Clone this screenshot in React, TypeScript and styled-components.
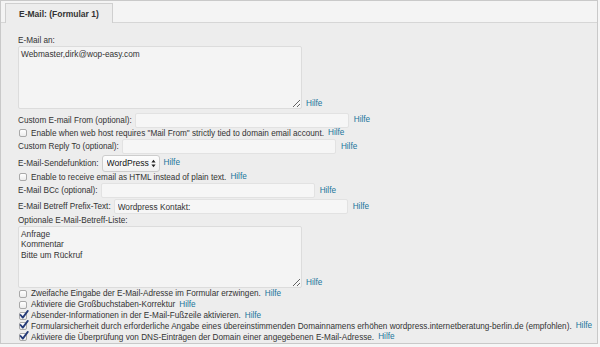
import React from 'react';
import styled, { createGlobalStyle } from 'styled-components';

const GlobalStyle = createGlobalStyle`
    html, body {
        margin: 0;
        padding: 0;
        background: #f6f6f6;
    }
    body {
        font-family: 'Liberation Sans', Arial, sans-serif;
        font-size: 8.2px;
        color: #333;
    }
`

const Help: React.FC = () => <HelpLink href="#">Hilfe</HelpLink>

const Check: React.FC<{ checked?: boolean }> = ({ checked }) => (
    <Box>
        {checked && (
            <svg width="10" height="10" viewBox="0 0 10 10">
                <path d="M1.6 5 L3.8 7.6 L8.8 0.9" fill="none" stroke="#243a78" strokeWidth="1.8" strokeLinecap="round" strokeLinejoin="round" />
            </svg>
        )}
    </Box>
)

const App: React.FC = () => {
    return (
        <>
            <GlobalStyle />
            <Frame>
                <TabBar>
                    <Tab>E-Mail: (Formular 1)</Tab>
                </TabBar>
                <Body>
                    <Label>E-Mail an:</Label>
                    <AreaRow>
                        <TextArea defaultValue="Webmaster,dirk@wop-easy.com" />
                        <Help />
                    </AreaRow>

                    <FieldRow $top={3}>
                        <span>Custom E-mail From (optional):</span>
                        <Input $width={214} />
                        <Help />
                    </FieldRow>
                    <CheckRow>
                        <Check />
                        <span>Enable when web host requires "Mail From" strictly tied to domain email account.</span>
                        <Help />
                    </CheckRow>
                    <FieldRow>
                        <span>Custom Reply To (optional):</span>
                        <Input $width={214} />
                        <Help />
                    </FieldRow>
                    <SelectRow>
                        <span>E-Mail-Sendefunktion:</span>
                        <SelectWrap>
                            <Select defaultValue="wp">
                                <option value="wp">WordPress</option>
                                <option value="php">PHP</option>
                            </Select>
                            <Arrows width="5" height="9" viewBox="0 0 5 9">
                                <path d="M2.5 0.8 L4.6 3.6 H0.4 Z M2.5 8.2 L4.6 5.4 H0.4 Z" fill="#222" />
                            </Arrows>
                        </SelectWrap>
                        <Help />
                    </SelectRow>
                    <CheckRow>
                        <Check />
                        <span>Enable to receive email as HTML instead of plain text.</span>
                        <Help />
                    </CheckRow>
                    <FieldRow>
                        <span>E-Mail BCc (optional):</span>
                        <Input $width={214} />
                        <Help />
                    </FieldRow>
                    <FieldRow>
                        <span>E-Mail Betreff Prefix-Text:</span>
                        <Input $width={234} defaultValue="Wordpress Kontakt:" />
                        <Help />
                    </FieldRow>

                    <Label>Optionale E-Mail-Betreff-Liste:</Label>
                    <AreaRow>
                        <TextArea $height={62} defaultValue={'Anfrage\nKommentar\nBitte um Rückruf'} />
                        <Help />
                    </AreaRow>

                    <CheckList>
                        <CheckRow>
                            <Check />
                            <span>Zweifache Eingabe der E-Mail-Adresse im Formular erzwingen.</span>
                            <Help />
                        </CheckRow>
                        <CheckRow>
                            <Check />
                            <span>Aktiviere die Großbuchstaben-Korrektur</span>
                            <Help />
                        </CheckRow>
                        <CheckRow>
                            <Check checked />
                            <span>Absender-Informationen in der E-Mail-Fußzeile aktivieren.</span>
                            <Help />
                        </CheckRow>
                        <CheckRow>
                            <Check checked />
                            <span>Formularsicherheit durch erforderliche Angabe eines übereinstimmenden Domainnamens erhöhen wordpress.internetberatung-berlin.de (empfohlen).</span>
                            <Help />
                        </CheckRow>
                        <CheckRow>
                            <Check checked />
                            <span>Aktiviere die Überprüfung von DNS-Einträgen der Domain einer angegebenen E-Mail-Adresse.</span>
                            <Help />
                        </CheckRow>
                    </CheckList>
                </Body>
            </Frame>
        </>
    )
}
export default App

const Frame = styled.div`
    width: 598px;
    height: 344px;
    box-sizing: border-box;
    border: 1px solid #c9c9c9;
    background: #ededed;
    display: flex;
    flex-direction: column;
    overflow: hidden;
`
const TabBar = styled.div`
    height: 22px;
    flex: 0 0 auto;
    box-sizing: border-box;
    background: #f4f4f4;
    border-bottom: 1px solid #d6d6d6;
    padding: 2px 0 0 4px;
    display: flex;
    align-items: flex-end;
`
const Tab = styled.div`
    height: 20px;
    box-sizing: border-box;
    margin-bottom: -1px;
    padding: 0 13px;
    background: #ededed;
    border: 1px solid #cfcfcf;
    border-bottom: none;
    font-size: 8.5px;
    font-weight: 700;
    color: #333;
    display: flex;
    align-items: center;
`
const Body = styled.div`
    padding: 12px 0 0 17px;
    display: flex;
    flex-direction: column;
`
const Label = styled.div`
    height: 11px;
    line-height: 11px;
`
const AreaRow = styled.div`
    display: flex;
    align-items: flex-end;
    gap: 4px;
`
const TextArea = styled.textarea<{ $height?: number }>`
    width: 284px;
    height: ${(p) => p.$height ?? 63}px;
    box-sizing: border-box;
    margin: 0;
    padding: 2px 2px;
    border: 1px solid #dcdcdc;
    border-radius: 2px;
    background: #f4f4f4;
    font-family: 'Liberation Sans', Arial, sans-serif;
    font-size: 8.3px;
    line-height: 10.5px;
    color: #333;
    resize: both;
    outline: none;
`
const HelpLink = styled.a`
    color: #21759b;
    text-decoration: none;
    line-height: 10px;
    &:visited {
        color: #21759b;
    }
`
const FieldRow = styled.div<{ $top?: number }>`
    height: 16px;
    margin-top: ${(p) => p.$top ?? 0}px;
    display: flex;
    align-items: center;
    white-space: nowrap;
`
const Input = styled.input<{ $width: number }>`
    width: ${(p) => p.$width}px;
    height: 15px;
    box-sizing: border-box;
    margin: 0 5px 0 3px;
    padding: 0 3px;
    border: 1px solid #e2e2e2;
    border-radius: 2px;
    background: #f6f6f6;
    font-family: 'Liberation Sans', Arial, sans-serif;
    font-size: 8.3px;
    color: #333;
    outline: none;
`
const SelectRow = styled.div`
    height: 17px;
    display: flex;
    align-items: center;
    white-space: nowrap;
`
const SelectWrap = styled.span`
    position: relative;
    display: inline-flex;
    margin: 0 4px 0 3px;
`
const Select = styled.select`
    appearance: none;
    width: 58px;
    height: 17px;
    box-sizing: border-box;
    margin: 0;
    padding: 0 0 0 4px;
    border: 1px solid #cdcdcd;
    border-radius: 3px;
    background: linear-gradient(#fdfdfd, #f1f1f1);
    font-family: 'Liberation Sans', Arial, sans-serif;
    font-size: 8.6px;
    color: #111;
    outline: none;
`
const Arrows = styled.svg`
    position: absolute;
    right: 4px;
    top: 4px;
    pointer-events: none;
`
const CheckList = styled.div`
    margin-top: 1px;
    display: flex;
    flex-direction: column;
`
const CheckRow = styled.div`
    height: 10.8px;
    display: flex;
    align-items: center;
    white-space: nowrap;
    & > span {
        margin-right: 4px;
    }
`
const Box = styled.span`
    position: relative;
    width: 8px;
    height: 8px;
    box-sizing: border-box;
    margin: 0 2px 0 1px;
    flex: 0 0 auto;
    border: 1px solid #a9a9a9;
    border-radius: 2px;
    background: linear-gradient(#ffffff, #ececec);
    & > svg {
        position: absolute;
        left: -1px;
        top: -3px;
    }
`
